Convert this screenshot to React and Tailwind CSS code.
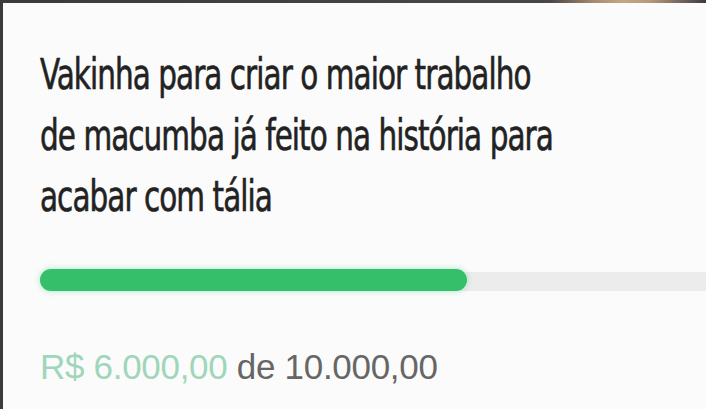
export default function App() {
  return (
    <div className="w-[706px] h-[409px] overflow-hidden bg-[#fbfbfb] flex flex-col">
      {/* top edge of the card frame */}
      <div className="h-[3px] w-full shrink-0 bg-[linear-gradient(90deg,#3b3b3b_0%,#4a4646_78%,#a58a70_84%,#c6a682_88%,#b89a7c_92%,#6a5f5a_97%,#3b3b3b_100%)]" />
      <div className="flex-1 flex border-l-[3px] border-[#3a3a3a]">
        <div className="flex-1 pl-[37px] pt-[41px] flex flex-col">
          <h1 className="w-[820px] whitespace-nowrap origin-left scale-x-[0.78] font-['DejaVu_Sans_Condensed','DejaVu_Sans',sans-serif] text-[42px] leading-[61px] tracking-[-1.2px] text-[#222222] font-normal [-webkit-text-stroke:0.6px_#222222]">
            Vakinha para criar o maior trabalho
            <br />
            de macumba já feito na história para
            <br />
            acabar com tália
          </h1>

          {/* progress bar: 60% raised */}
          <div className="mt-[42px] relative h-[22px] w-[720px]">
            <div className="absolute left-0 right-0 top-[3px] h-[19px] rounded-full bg-[#ececec]" />
            <div className="absolute left-0 top-0 h-[22px] w-[427px] rounded-full bg-[#36bf6b] shadow-[0_0_6px_rgba(60,210,130,0.45)]" />
          </div>

          <p className="mt-[56px] font-['Liberation_Sans',Arial,sans-serif] text-[35px] leading-[40px] tracking-[-0.3px]">
            <span className="text-[#9fd6ba]">R$ 6.000,00</span>{" "}
            <span className="text-[#666666]">de 10.000,00</span>
          </p>
        </div>
      </div>
    </div>
  );
}
